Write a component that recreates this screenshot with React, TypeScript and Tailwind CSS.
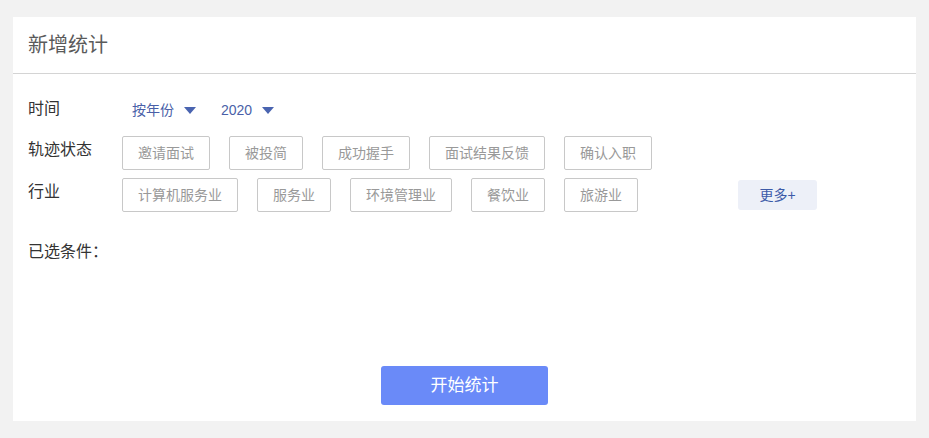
import { useState } from 'react'

const trackStates = ['邀请面试', '被投简', '成功握手', '面试结果反馈', '确认入职']
const industries = ['计算机服务业', '服务业', '环境管理业', '餐饮业', '旅游业']

function Caret() {
  return (
    <svg width="12" height="7" viewBox="0 0 12 7" className="ml-[10px]">
      <path d="M0 0 L12 0 L6 7 Z" fill="#4a64b0" />
    </svg>
  )
}

function Tag({ label, active, onClick }: { label: string; active: boolean; onClick: () => void }) {
  return (
    <button
      onClick={onClick}
      className={`h-[34px] px-[15px] border rounded-[2px] text-[14px] leading-none ${
        active ? 'border-[#6a8af8] text-[#6a8af8]' : 'border-[#c8c8c8] text-[#999]'
      }`}
    >
      {label}
    </button>
  )
}

export default function App() {
  const [picked, setPicked] = useState<string[]>([])

  const toggle = (v: string) =>
    setPicked(prev => (prev.includes(v) ? prev.filter(p => p !== v) : [...prev, v]))

  return (
    <div
      className="min-h-[438px] bg-[#f2f2f2] pt-[17px] pl-[13px] pr-[13px]"
      style={{ fontFamily: '"Liberation Sans", "Noto Sans CJK SC", sans-serif' }}
    >
      <div className="bg-white w-[903px] h-[404px] flex flex-col">
        {/* 标题 */}
        <div className="h-[57px] flex items-center px-[15px] border-b border-[#d4d4d4]">
          <h2 className="text-[20px] text-[#5a5a5a]">新增统计</h2>
        </div>

        <div className="flex-1 flex flex-col px-[15px] pt-[20px] pb-[16px]">
          {/* 时间 */}
          <div className="flex h-[34px]">
            <div className="w-[94px] text-[16px] text-[#333] leading-[30px]">时间</div>
            <div className="flex items-center text-[14px] text-[#4a5fa8] pb-[1px]">
              <span className="ml-[10px]">按年份</span>
              <Caret />
              <span className="ml-[25px]">2020</span>
              <Caret />
            </div>
          </div>

          {/* 轨迹状态 */}
          <div className="flex mt-[8px]">
            <div className="w-[94px] text-[16px] text-[#333] leading-[28px]">轨迹状态</div>
            <div className="flex gap-[19px]">
              {trackStates.map(s => (
                <Tag key={s} label={s} active={picked.includes(s)} onClick={() => toggle(s)} />
              ))}
            </div>
          </div>

          {/* 行业 */}
          <div className="flex mt-[8px]">
            <div className="w-[94px] text-[16px] text-[#333] leading-[28px]">行业</div>
            <div className="flex gap-[19px]">
              {industries.map(s => (
                <Tag key={s} label={s} active={picked.includes(s)} onClick={() => toggle(s)} />
              ))}
            </div>
            <button className="ml-[100px] mt-[2px] w-[79px] h-[30px] rounded-[3px] bg-[#edf0f8] text-[14px] text-[#3c5aa8]">
              更多+
            </button>
          </div>

          {/* 已选条件 */}
          <div className="mt-[28px] text-[16px] text-[#333] leading-[24px]">
            已选条件：{picked.join('、')}
          </div>

          <div className="mt-auto flex justify-center">
            <button className="w-[167px] h-[39px] rounded-[3px] bg-[#6a8af8] text-white text-[17px]">
              开始统计
            </button>
          </div>
        </div>
      </div>
    </div>
  )
}
